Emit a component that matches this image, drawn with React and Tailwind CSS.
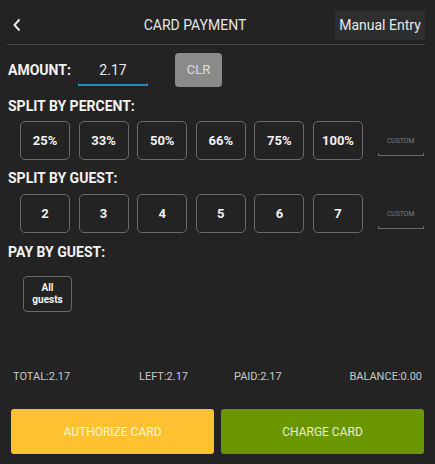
import React from "react";

function Box({ children }) {
  return (
    <div className="w-[50px] h-[39px] border border-[#6a6a6a] rounded-[5px] flex items-center justify-center text-[13px] font-bold text-[#f2f2f2]">
      {children}
    </div>
  );
}

function Custom() {
  return (
    <div className="ml-[6px] w-[46px] h-[39px] flex flex-col items-center justify-center relative">
      <span className="text-[7px] text-[#7a7a7a] tracking-tight mt-[1px]">CUSTOM</span>
      <div className="absolute left-0 right-0 bottom-[4px] h-[3px] border-b border-l border-r border-[#6a6a6a]" />
    </div>
  );
}

export default function App() {
  const pct = ["25%", "33%", "50%", "66%", "75%", "100%"];
  const guests = ["2", "3", "4", "5", "6", "7"];
  return (
    <div className="w-[435px] h-[464px] bg-[#232323] font-['Roboto',sans-serif] flex flex-col overflow-hidden">
      <div className="ml-[7px] mr-[10px] h-[45px] pt-[6px] border-b border-[#444] flex items-center">
        <div className="w-[50px] h-full flex items-center pl-[5px]">
          <svg width="10" height="14" viewBox="0 0 10 14">
            <path d="M7.5 1.5 L2.5 7 L7.5 12.5" stroke="#eaeaea" strokeWidth="2" fill="none" />
          </svg>
        </div>
        <div className="flex-1 text-center text-[14px] text-[#e6e6e6] pr-[2px]">CARD PAYMENT</div>
        <div className="w-[90px] h-[29px] bg-[#2d2e30] flex items-center justify-center text-[14px] text-[#e8e8e8]">
          Manual Entry
        </div>
      </div>

      <div className="flex items-center h-[50px] pl-[8px]">
        <span className="text-[14px] font-bold text-[#f2f2f2] w-[70px]">AMOUNT:</span>
        <div className="w-[70px] h-[30px] relative flex items-center justify-center">
          <span className="text-[14px] text-[#eaeaea]">2.17</span>
          <div className="absolute left-0 right-0 bottom-[-1px] h-[3px] border-b-[2px] border-l border-r border-[#1d8ec4]" />
        </div>
        <div className="ml-[27px] w-[47px] h-[34px] rounded-[4px] bg-[#8a8a8a] flex items-center justify-center text-[13px] text-[#dedede]">
          CLR
        </div>
      </div>

      <div className="pl-[8px] mt-[3px] text-[14px] font-bold text-[#f2f2f2] leading-[16px]">SPLIT BY PERCENT:</div>
      <div className="flex items-center pl-[20px] mt-[7px] gap-[8.6px]">
        {pct.map((p) => (
          <Box key={p}>{p}</Box>
        ))}
        <Custom />
      </div>

      <div className="pl-[8px] mt-[10px] text-[14px] font-bold text-[#f2f2f2] leading-[16px]">SPLIT BY GUEST:</div>
      <div className="flex items-center pl-[20px] mt-[8px] gap-[8.6px]">
        {guests.map((p) => (
          <Box key={p}>{p}</Box>
        ))}
        <Custom />
      </div>

      <div className="pl-[8px] mt-[11px] text-[14px] font-bold text-[#f2f2f2] leading-[16px]">PAY BY GUEST:</div>
      <div className="pl-[23px] mt-[16px]">
        <div className="w-[49px] h-[36px] border border-[#6a6a6a] rounded-[4px] flex flex-col items-center justify-center text-[10px] font-bold text-[#f2f2f2] leading-[12px]">
          <span>All</span>
          <span>guests</span>
        </div>
      </div>

      <div className="flex-1" />

      <div className="flex items-center justify-between px-[13px] text-[11px] text-[#c9c9c9] h-[16px]">
        <span className="w-[126px]">TOTAL:2.17</span>
        <span className="w-[95px]">LEFT:2.17</span>
        <span className="flex-1">PAID:2.17</span>
        <span>BALANCE:0.00</span>
      </div>

      <div className="flex gap-[7px] px-[11px] mt-[24px] mb-[10px] h-[45px]">
        <div className="flex-1 rounded-[3px] bg-[#fec131] flex items-center justify-center text-[12px] text-[#fff7e2]">
          AUTHORIZE CARD
        </div>
        <div className="flex-1 rounded-[3px] bg-[#6a9600] flex items-center justify-center text-[12px] text-[#e6eed6]">
          CHARGE CARD
        </div>
      </div>
    </div>
  );
}
